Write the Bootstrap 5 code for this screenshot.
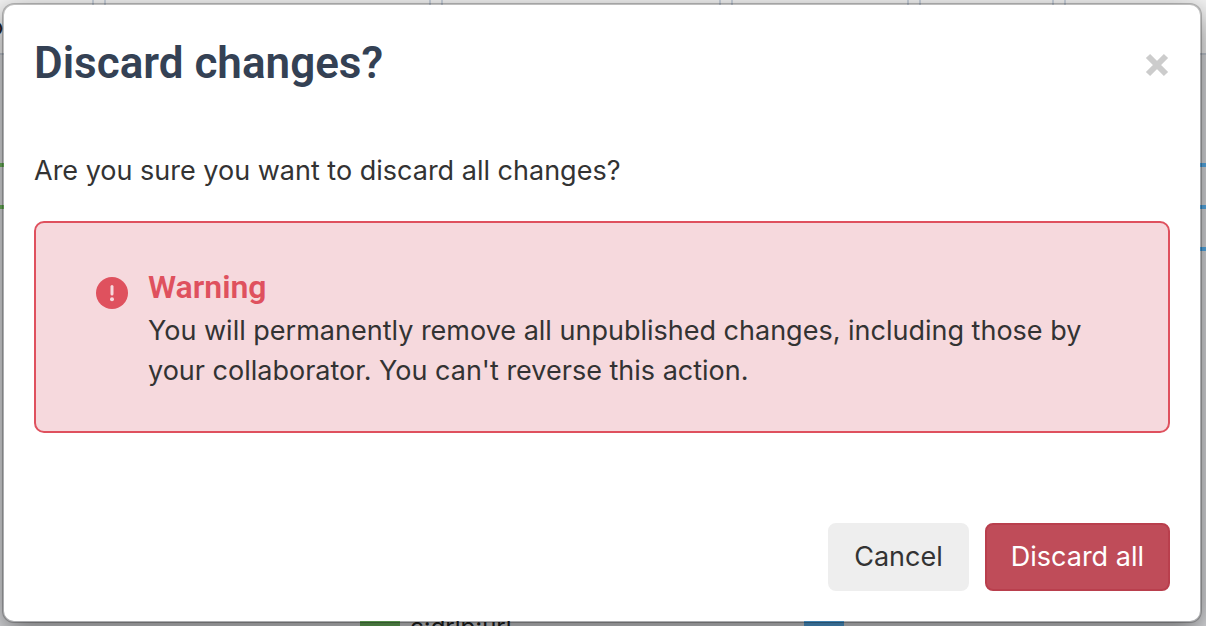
<!DOCTYPE html>
<html lang="en">
<head>
<meta charset="utf-8">
<meta name="viewport" content="width=device-width, initial-scale=1">
<title>Discard changes?</title>
<link href="https://cdn.jsdelivr.net/npm/bootstrap@5.3.0/dist/css/bootstrap.min.css" rel="stylesheet">
<style>
body { font-family: Inter, sans-serif; font-size: 27px; line-height: 40px; color: #333; background: #dcdde0; }
.page { min-height: 100vh; padding: 3px 4px 3px 2px; }
.backdrop-canvas { z-index: 0; }
.tabs-strip { height: 55px; background: #f4f4f4; border-bottom: 2px solid #c3c9d2; }
.tab-edge { position: absolute; top: 0; width: 14px; height: 20px; border: 2px solid #ccd4de; border-width: 0 2px; }
.wire { position: absolute; height: 4px; width: 8px; }
.wire-green { background: #6fb860; left: 0; }
.wire-blue { background: #58b0ee; right: 0; }
.node-swatch { position: absolute; bottom: 0; width: 40px; height: 6px; }
.canvas-text { position: absolute; font-size: 24px; line-height: 26px; color: #222; }
.dialog { z-index: 1; background: #fff; background-clip: padding-box; border: 2px solid rgba(0,0,0,.22); border-radius: 12px; padding: 30px; box-shadow: 0 10px 30px rgba(0,0,0,.5); }
.dialog-title { font: 600 44px/56px Roboto, sans-serif; color: #344154; }
.dialog-close { color: #ccc; width: 24px; height: 24px; margin-top: 18px; margin-right: 1px; }
.dialog-question { margin: 60px 0 30px; }
.notice { background: #f6d9dd; border: 2px solid #df515e; border-radius: 10px; padding: 40px 60px; }
.notice-icon { margin-top: 14px; }
.notice-title { font: 600 32px/48px Roboto, sans-serif; color: #df515e; }
.dialog-btn { font-size: 27px; line-height: 40px; padding: 12px 24px; border-width: 2px; border-radius: 8px; }
.btn-quiet { --bs-btn-bg: #eee; --bs-btn-border-color: #eee; --bs-btn-color: #333; --bs-btn-hover-bg: #ddd; }
.btn-discard { --bs-btn-bg: #bf4c59; --bs-btn-border-color: #b93f4d; --bs-btn-color: #fff; --bs-btn-hover-bg: #a93e4a; --bs-btn-hover-color: #fff; }
</style>
</head>
<body>
<div class="page position-relative overflow-hidden d-flex flex-column">
  <div class="backdrop-canvas position-absolute top-0 start-0 w-100 h-100" aria-hidden="true">
    <div class="tabs-strip"></div>
    <span class="tab-edge" style="left:92px"></span>
    <span class="tab-edge" style="left:429px"></span>
    <span class="tab-edge" style="left:719px"></span>
    <span class="tab-edge" style="left:907px"></span>
    <span class="tab-edge" style="left:1052px"></span>
    <span class="wire wire-green" style="top:163px"></span>
    <span class="wire wire-green" style="top:205px"></span>
    <span class="wire wire-blue" style="top:163px"></span>
    <span class="wire wire-blue" style="top:205px"></span>
    <span class="wire wire-blue" style="top:247px"></span>
    <span class="node-swatch" style="left:360px;background:#6cb55e"></span>
    <span class="node-swatch" style="left:804px;background:#53a6e2"></span>
    <span class="canvas-text" style="left:-11px;top:14px">o</span>
    <span class="canvas-text" style="left:410px;top:614px">c:drlp:url</span>
  </div>
  <div class="dialog position-relative flex-grow-1 d-flex flex-column" role="dialog" aria-modal="true" aria-labelledby="dialogTitle">
    <header class="d-flex justify-content-between align-items-start">
      <h1 class="dialog-title m-0" id="dialogTitle">Discard changes?</h1>
      <button type="button" class="dialog-close border-0 bg-transparent p-0 d-flex" aria-label="Close">
        <svg width="24" height="24" viewBox="0 0 24 24"><path d="M3 3 21 21M21 3 3 21" stroke="currentColor" stroke-width="6"/></svg>
      </button>
    </header>
    <p class="dialog-question">Are you sure you want to discard all changes?</p>
    <section class="notice d-flex">
      <svg class="notice-icon flex-shrink-0" width="32" height="32" viewBox="0 0 32 32" aria-hidden="true"><circle cx="16" cy="16" r="16" fill="#df515e"/><path d="M16 9.500v7.500" stroke="#f6d9dd" stroke-width="3" stroke-linecap="round"/><circle cx="16" cy="22.300" r="2" fill="#f6d9dd"/></svg>
      <div class="ms-3 ps-1">
        <h2 class="notice-title m-0">Warning</h2>
        <p class="m-0">You will permanently remove all unpublished changes, including those by your collaborator. You can't reverse this action.</p>
      </div>
    </section>
    <footer class="d-flex justify-content-end gap-3 mt-auto">
      <button type="button" class="btn btn-quiet dialog-btn">Cancel</button>
      <button type="button" class="btn btn-discard dialog-btn">Discard all</button>
    </footer>
  </div>
</div>
<script src="https://cdn.jsdelivr.net/npm/bootstrap@5.3.0/dist/js/bootstrap.bundle.min.js"></script>
</body>
</html>
